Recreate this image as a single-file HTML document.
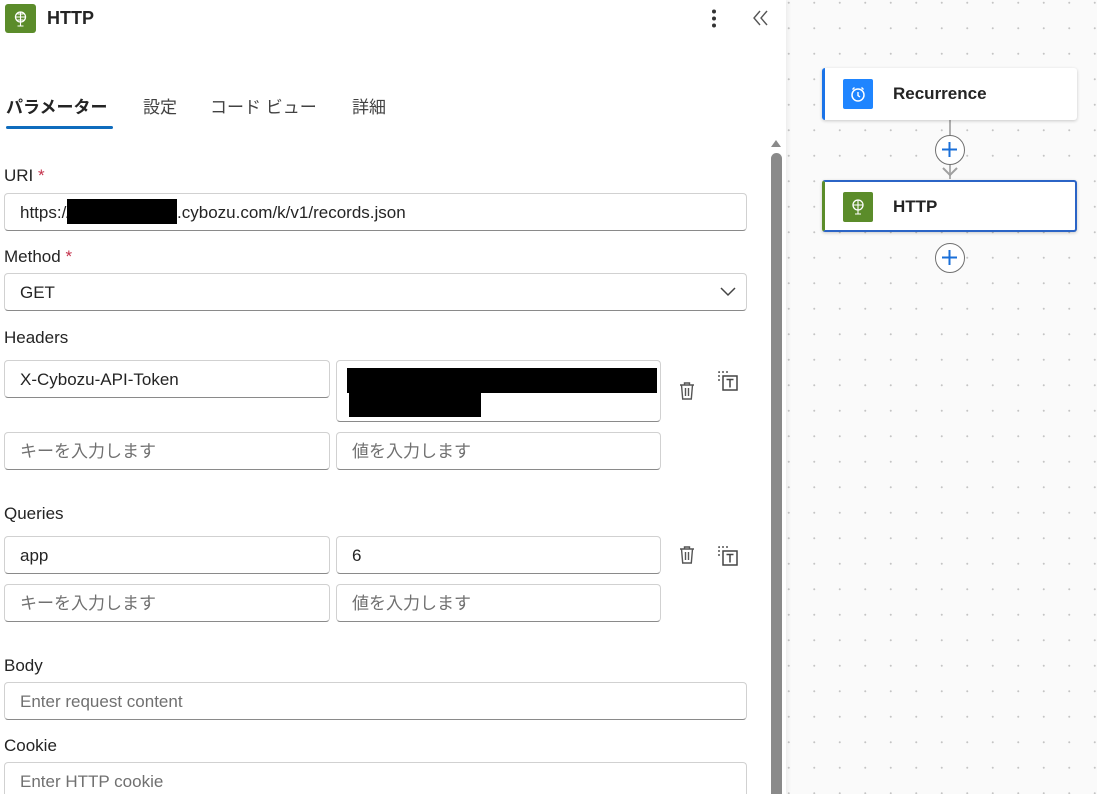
<!DOCTYPE html>
<html style="overflow:hidden;width:1097px;height:794px"><head><meta charset="utf-8"><style>
*{box-sizing:border-box;margin:0;padding:0}
body{width:1097px;height:794px;overflow:hidden;font-family:"Liberation Sans","Noto Sans CJK JP",sans-serif;color:#242424;background:#fafafa;position:relative}
.canvas{position:absolute;left:786px;top:0;width:311px;height:794px;background-color:#fafafa;background-image:radial-gradient(circle,#c4c4c4 0.8px,transparent 1.2px);background-size:25.5px 25.5px;background-position:-10px -10px}
.panel{position:absolute;left:0;top:0;width:786px;height:794px;background:#fff;box-shadow:2px 0 4px rgba(0,0,0,.06);overflow:hidden}
.abs{position:absolute}
.lbl{position:absolute;left:4px;font-size:17px;color:#242424}
.star{color:#c4314b}
.inp{position:absolute;height:38px;border:1px solid #d1d1d1;border-bottom-color:#8a8a8a;border-radius:4px;font-size:17px;padding:0 15px;line-height:38px;background:#fff;white-space:nowrap;overflow:hidden}
.ph{color:#707070}
.tab{position:absolute;top:93px;font-size:17px;color:#424242}
.card{position:absolute;left:822px;width:255px;height:52px;background:#fff;border-radius:3px;box-shadow:0 1px 3px rgba(0,0,0,.2)}
.plus{position:absolute;left:935px;width:30px;height:30px;border:1.5px solid #707070;border-radius:50%;background:#fff}
</style></head><body>
<div class="canvas"></div>
<div class="panel">
  <div class="abs" style="left:5px;top:4px;width:31px;height:29px;background:#5b8c2a;border-radius:3px">
    <svg width="31" height="29" viewBox="0 0 31 29"><circle cx="15.5" cy="13" r="5" fill="none" stroke="#fff" stroke-width="1.3"/><path d="M10.5 13h10M15.5 8v10M12.5 10h6M12.5 16h6M15.5 18v4M12.5 22h6" stroke="#fff" stroke-width="1.1" fill="none"/></svg>
  </div>
  <div class="abs" style="left:47px;top:8px;font-size:18px;font-weight:600">HTTP</div>
  <svg class="abs" style="left:708px;top:9px" width="12" height="20"><circle cx="6" cy="2.5" r="2" fill="#333"/><circle cx="6" cy="9.5" r="2" fill="#333"/><circle cx="6" cy="16.5" r="2" fill="#333"/></svg>
  <svg class="abs" style="left:752px;top:9px" width="18" height="18" viewBox="0 0 18 18"><path d="M8 2L2 9l6 7M15 2L9 9l6 7" stroke="#555" stroke-width="1.4" fill="none"/></svg>

  <div class="tab" style="left:6px;color:#242424;font-weight:600">パラメーター</div>
  <div class="abs" style="left:6px;top:126px;width:107px;height:3px;background:#0f6cbd;border-radius:2px"></div>
  <div class="tab" style="left:143px">設定</div>
  <div class="tab" style="left:210px">コード ビュー</div>
  <div class="tab" style="left:352px">詳細</div>

  <div class="lbl" style="top:166px">URI <span class="star">*</span></div>
  <div class="inp" style="left:4px;top:193px;width:743px">https://<span style="display:inline-block;width:110px;height:25px;background:#000;vertical-align:-6px;margin-left:-4px"></span>.cybozu.com/k/v1/records.json</div>

  <div class="lbl" style="top:247px">Method <span class="star">*</span></div>
  <div class="inp" style="left:4px;top:273px;width:743px">GET</div>
  <svg class="abs" style="left:719px;top:285px" width="18" height="12"><path d="M2 3l7 7 7-7" stroke="#444" stroke-width="1.5" fill="none"/></svg>

  <div class="lbl" style="top:328px">Headers</div>
  <div class="inp" style="left:4px;top:360px;width:326px">X-Cybozu-API-Token</div>
  <div class="inp" style="left:336px;top:360px;width:325px;height:62px;padding:0">
    <div class="abs" style="left:10px;top:7px;width:310px;height:25px;background:#000"></div>
    <div class="abs" style="left:12px;top:32px;width:132px;height:24px;background:#000"></div>
  </div>
  <div class="inp ph" style="left:4px;top:432px;width:326px">キーを入力します</div>
  <div class="inp ph" style="left:336px;top:432px;width:325px">値を入力します</div>

  <div class="lbl" style="top:504px">Queries</div>
  <div class="inp" style="left:4px;top:536px;width:326px">app</div>
  <div class="inp" style="left:336px;top:536px;width:325px">6</div>
  <div class="inp ph" style="left:4px;top:584px;width:326px">キーを入力します</div>
  <div class="inp ph" style="left:336px;top:584px;width:325px">値を入力します</div>

  <div class="lbl" style="top:656px">Body</div>
  <div class="inp ph" style="left:4px;top:682px;width:743px">Enter request content</div>
  <div class="lbl" style="top:736px">Cookie</div>
  <div class="inp ph" style="left:4px;top:762px;width:743px">Enter HTTP cookie</div>

  <svg class="abs" style="left:677px;top:380px" width="20" height="22" viewBox="0 0 20 22"><path d="M3 5h14M7.5 5V3h5v2M4.5 5l1.2 14h8.6l1.2-14M8.5 8v8M11.5 8v8" stroke="#555" stroke-width="1.4" fill="none"/></svg>
  <svg class="abs" style="left:716px;top:369px" width="24" height="24" viewBox="0 0 24 24"><path d="M3 12V3h9" stroke="#555" stroke-width="1.5" stroke-dasharray="2 2" fill="none"/><rect x="7" y="7" width="14" height="14" stroke="#444" stroke-width="1.5" fill="none"/><path d="M10.5 10.5h7M14 10.5v8" stroke="#444" stroke-width="1.5"/></svg>
  <svg class="abs" style="left:677px;top:544px" width="20" height="22" viewBox="0 0 20 22"><path d="M3 5h14M7.5 5V3h5v2M4.5 5l1.2 14h8.6l1.2-14M8.5 8v8M11.5 8v8" stroke="#555" stroke-width="1.4" fill="none"/></svg>
  <svg class="abs" style="left:716px;top:544px" width="24" height="24" viewBox="0 0 24 24"><path d="M3 12V3h9" stroke="#555" stroke-width="1.5" stroke-dasharray="2 2" fill="none"/><rect x="7" y="7" width="14" height="14" stroke="#444" stroke-width="1.5" fill="none"/><path d="M10.5 10.5h7M14 10.5v8" stroke="#444" stroke-width="1.5"/></svg>

  <svg class="abs" style="left:770px;top:138px" width="12" height="10"><path d="M1 9L6 2l5 7z" fill="#8a8a8a"/></svg>
  <div class="abs" style="left:771px;top:153px;width:11px;height:660px;background:#8a8a8a;border-radius:6px"></div>
</div>

<div class="abs" style="left:949px;top:119px;width:2px;height:60px;background:#b0b0b0"></div>
<svg class="abs" style="left:940px;top:163px" width="20" height="16"><path d="M3 5l7 7 7-7" stroke="#a0a0a0" stroke-width="2" fill="none"/></svg>
<div class="card" style="top:68px;border-left:3px solid #1a73e8">
  <div class="abs" style="left:18px;top:11px;width:30px;height:30px;background:#1f85ff;border-radius:2px">
    <svg width="30" height="30" viewBox="0 0 30 30"><circle cx="15" cy="16" r="6" fill="none" stroke="#fff" stroke-width="1.5"/><path d="M15 13v3.5l2 1.5M9.5 10.5l2-2M20.5 10.5l-2-2" stroke="#fff" stroke-width="1.4" fill="none"/></svg>
  </div>
  <div class="abs" style="left:68px;top:16px;font-size:17px;font-weight:600">Recurrence</div>
</div>
<div class="plus" style="top:135px"><svg width="27" height="27"><path d="M13.5 6v15M6 13.5h15" stroke="#1a6fd8" stroke-width="2"/></svg></div>
<div class="card" style="top:180px;border:2px solid #2b64c6;border-left:3px solid #5b8c2a">
  <div class="abs" style="left:18px;top:10px;width:30px;height:30px;background:#5b8c2a;border-radius:2px">
    <svg width="30" height="30" viewBox="0 0 30 30"><circle cx="15" cy="13" r="5" fill="none" stroke="#fff" stroke-width="1.3"/><path d="M10 13h10M15 8v10M15 18v4M12 22h6" stroke="#fff" stroke-width="1.1" fill="none"/></svg>
  </div>
  <div class="abs" style="left:68px;top:15px;font-size:17px;font-weight:600">HTTP</div>
</div>
<div class="plus" style="top:243px"><svg width="27" height="27"><path d="M13.5 6v15M6 13.5h15" stroke="#1a6fd8" stroke-width="2"/></svg></div>
</body></html>
